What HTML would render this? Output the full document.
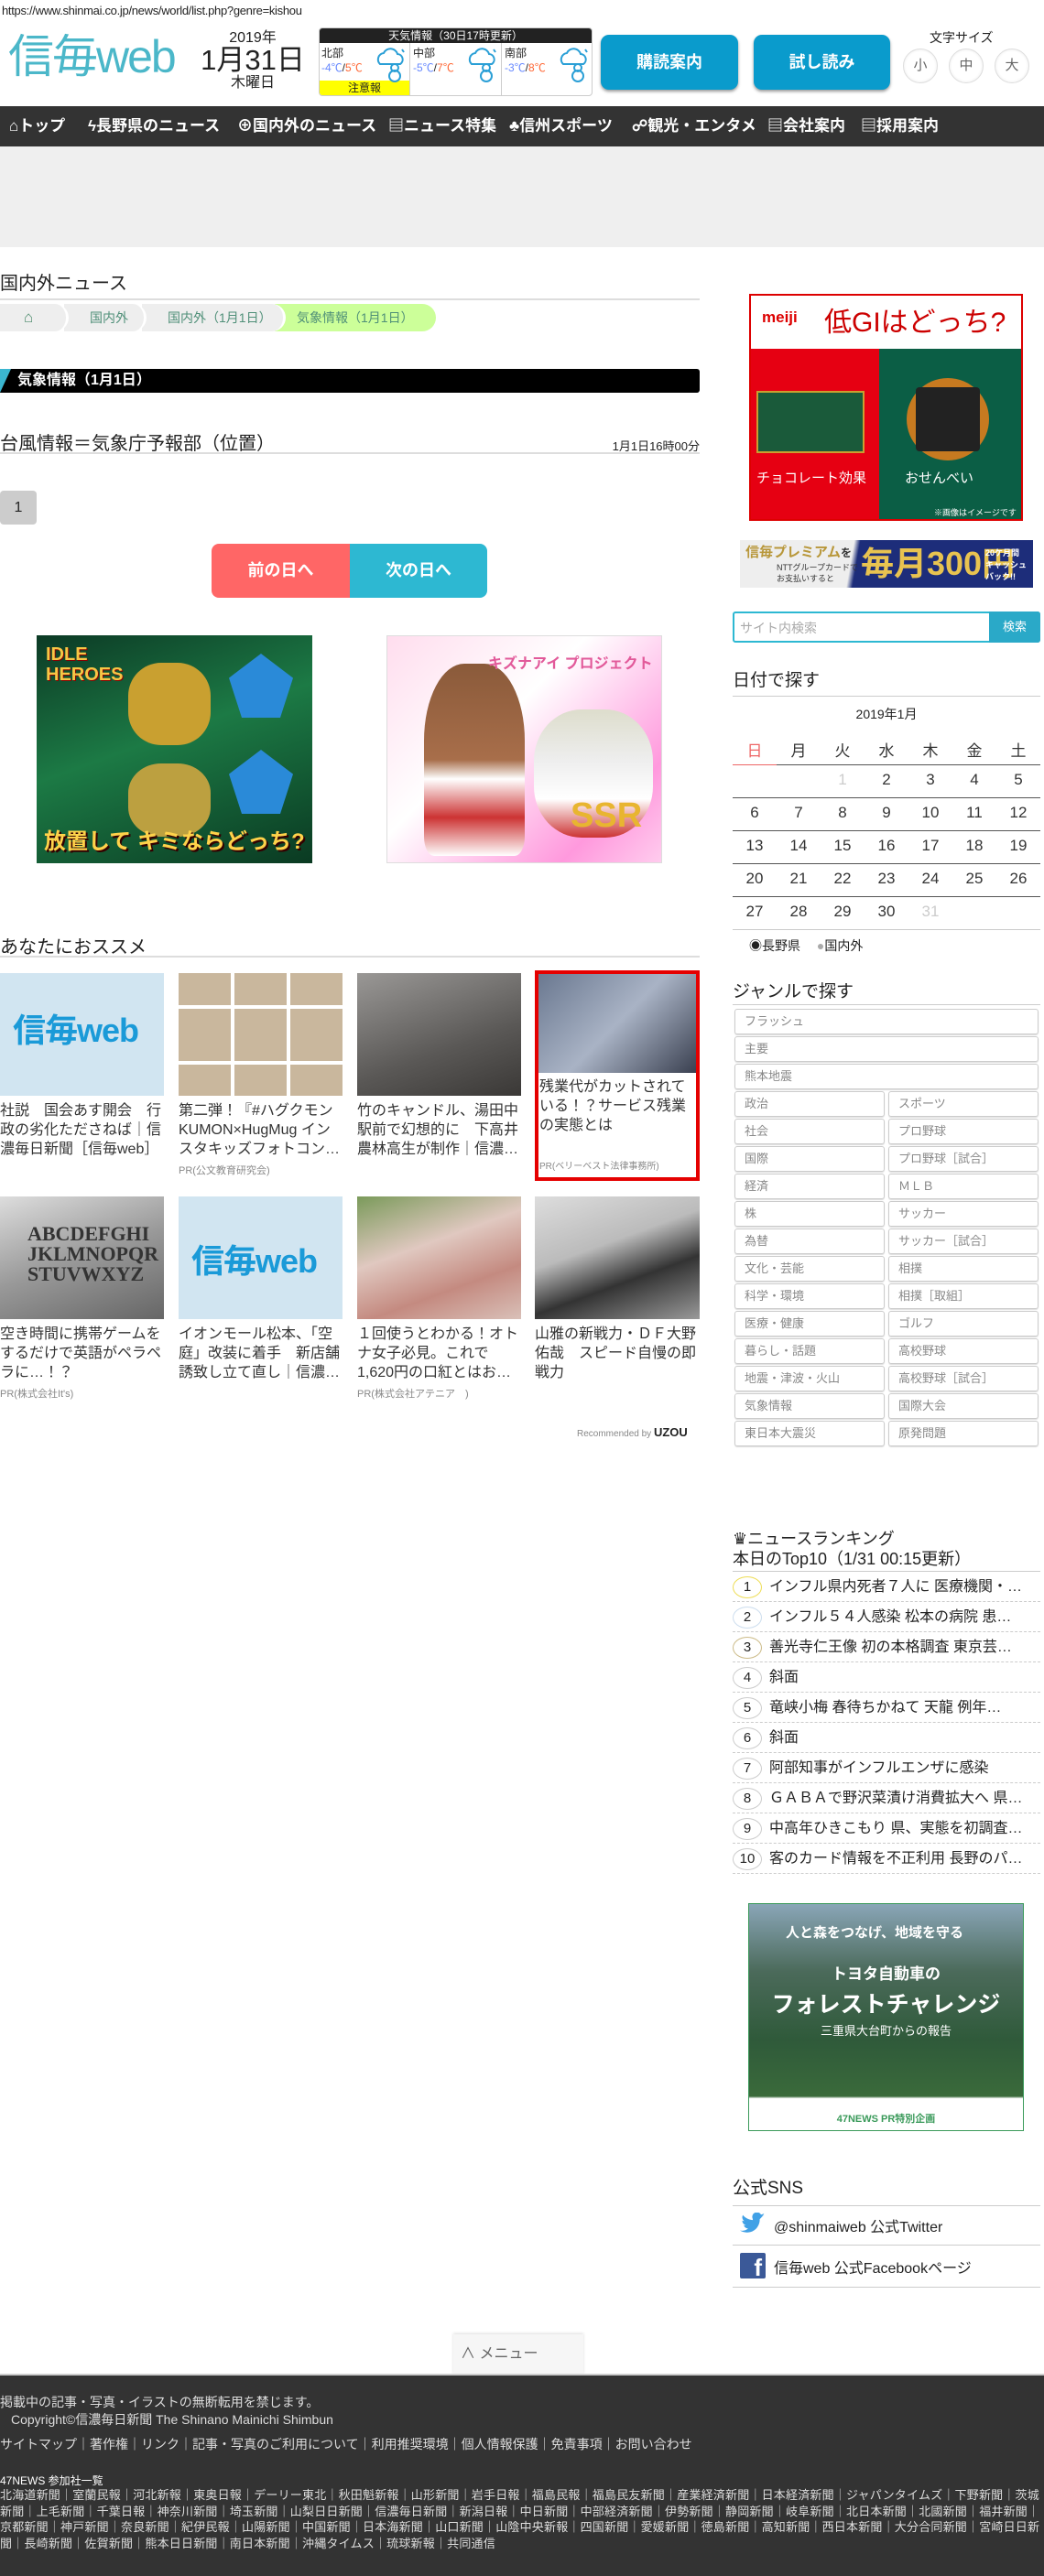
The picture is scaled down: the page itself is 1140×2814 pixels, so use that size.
<!DOCTYPE html>
<html><head><meta charset="utf-8">
<style>
*{margin:0;padding:0;box-sizing:border-box}
body{width:1140px;height:2814px;position:relative;background:#fff;font-family:"Liberation Sans","Noto Sans CJK JP",sans-serif;color:#222;overflow:hidden}
.a{position:absolute}
.nav span{position:absolute;top:0;line-height:44px;color:#fff;font-weight:bold;font-size:17px;white-space:nowrap}
.bc{position:absolute;top:332px;height:30px;line-height:30px;background:#eee;border-radius:0 15px 15px 0;color:#4f8f78;font-size:14px;padding-left:28px}
.g{position:absolute;height:28px;border:1px solid #ccc;border-radius:3px;color:#888;font-size:13px;line-height:26px;padding-left:10px;box-shadow:0 1px 1px #ddd}
.cal{position:absolute;width:48px;text-align:center;font-size:17px;color:#333}
.rk{position:absolute;left:800px;width:336px;height:33px;border-bottom:1px dashed #ccc;font-size:16px;line-height:33px;white-space:nowrap;overflow:hidden}
.rk b{display:inline-block;width:32px;height:24px;border:1px solid #ccc;border-radius:50%;text-align:center;line-height:22px;font-weight:normal;font-size:15px;margin:0 8px 0 0;vertical-align:middle}
.rt{position:absolute;font-size:16px;line-height:21px;color:#333;width:180px}
.pr{position:absolute;font-size:11px;color:#888}
.ft{position:absolute;left:0;color:#ddd;font-size:13px;white-space:nowrap}
</style></head><body>

<div class="a" style="left:2px;top:4px;font-size:13px;color:#222;letter-spacing:-0.3px">https://www.shinmai.co.jp/news/world/list.php?genre=kishou</div>

<div class="a" style="left:9px;top:34px;font-size:50px;color:#4bb7c9;letter-spacing:-2px;line-height:56px">信毎web</div>
<div class="a" style="left:220px;top:33px;width:112px;text-align:center;font-size:16px;line-height:18px">2019年</div>
<div class="a" style="left:218px;top:49px;width:116px;text-align:center;font-size:31px;line-height:34px">1月31日</div>
<div class="a" style="left:220px;top:82px;width:112px;text-align:center;font-size:16px;line-height:18px">木曜日</div>

<div class="a" style="left:348px;top:30px;width:299px;height:75px;border:1px solid #ccc;border-radius:4px;overflow:hidden">
 <div style="background:#222;color:#fff;font-size:12px;text-align:center;height:16px;line-height:16px">天気情報（30日17時更新）</div>
 <div class="a" style="left:0;top:16px;width:99px;height:58px;border-right:1px solid #ccc;font-size:12px;line-height:16px;padding:3px 2px">北部<br><span style="color:#68f">-4℃</span>/<span style="color:#f63">5℃</span></div>
 <div class="a" style="left:0;top:57px;width:98px;height:17px;background:#ff0;font-size:12px;text-align:center;line-height:17px">注意報</div>
 <div class="a" style="left:100px;top:16px;width:99px;height:58px;border-right:1px solid #ccc;font-size:12px;line-height:16px;padding:3px 2px">中部<br><span style="color:#68f">-5℃</span>/<span style="color:#f63">7℃</span></div>
 <div class="a" style="left:200px;top:16px;width:99px;height:58px;font-size:12px;line-height:16px;padding:3px 2px">南部<br><span style="color:#68f">-3℃</span>/<span style="color:#f63">8℃</span></div>
 <svg class="a" style="left:60px;top:19px" width="36" height="40"><g fill="none" stroke="#2a9fd6" stroke-width="2"><path d="M6 20a7 7 0 0 1 4-12a8 8 0 0 1 15 1a6 6 0 0 1 3 11z"/><circle cx="22" cy="24" r="4"/><circle cx="22" cy="33" r="6"/><path d="M30 4l2 3"/></g></svg>
 <svg class="a" style="left:160px;top:19px" width="36" height="40"><g fill="none" stroke="#2a9fd6" stroke-width="2"><path d="M6 20a7 7 0 0 1 4-12a8 8 0 0 1 15 1a6 6 0 0 1 3 11z"/><circle cx="22" cy="24" r="4"/><circle cx="22" cy="33" r="6"/><path d="M30 4l2 3"/></g></svg>
 <svg class="a" style="left:260px;top:19px" width="36" height="40"><g fill="none" stroke="#2a9fd6" stroke-width="2"><path d="M6 20a7 7 0 0 1 4-12a8 8 0 0 1 15 1a6 6 0 0 1 3 11z"/><circle cx="22" cy="24" r="4"/><circle cx="22" cy="33" r="6"/><path d="M30 4l2 3"/></g></svg>
</div>

<div class="a" style="left:656px;top:38px;width:150px;height:60px;background:#0a9bcc;border-radius:9px;box-shadow:0 2px 3px #999;color:#fff;font-weight:bold;font-size:18px;text-align:center;line-height:60px">購読案内</div>
<div class="a" style="left:823px;top:38px;width:149px;height:60px;background:#0a9bcc;border-radius:9px;box-shadow:0 2px 3px #999;color:#fff;font-weight:bold;font-size:18px;text-align:center;line-height:60px">試し読み</div>
<div class="a" style="left:1015px;top:31px;font-size:14px">文字サイズ</div>
<div class="a" style="left:986px;top:53px;width:38px;height:38px;border-radius:50%;background:radial-gradient(#fff 60%,#ddd);border:1px solid #ddd;text-align:center;line-height:36px;font-size:15px;color:#666">小</div>
<div class="a" style="left:1036px;top:53px;width:38px;height:38px;border-radius:50%;background:radial-gradient(#fff 60%,#ddd);border:1px solid #ddd;text-align:center;line-height:36px;font-size:15px;color:#666">中</div>
<div class="a" style="left:1086px;top:53px;width:38px;height:38px;border-radius:50%;background:radial-gradient(#fff 60%,#ddd);border:1px solid #ddd;text-align:center;line-height:36px;font-size:15px;color:#666">大</div>

<div class="a nav" style="left:0;top:116px;width:1140px;height:44px;background:#333">
 <span style="left:10px">⌂トップ</span><span style="left:96px">ϟ長野県のニュース</span><span style="left:259px">⊕国内外のニュース</span><span style="left:424px">▤ニュース特集</span><span style="left:556px">♣信州スポーツ</span><span style="left:690px">☍観光・エンタメ</span><span style="left:838px">▤会社案内</span><span style="left:940px">▤採用案内</span>
</div>
<div class="a" style="left:0;top:160px;width:1140px;height:110px;background:#efefef"></div>

<!-- main -->
<div class="a" style="left:0;top:293px;font-size:20px">国内外ニュース</div>
<div class="a" style="left:0;top:326px;width:764px;height:2px;background:#ddd"></div>
<div class="bc" style="left:300px;width:176px;background:#ccff99;z-index:1;padding-left:24px">気象情報（1月1日）</div>
<div class="bc" style="left:155px;width:157px;z-index:2;border-right:3px solid #fff">国内外（1月1日）</div>
<div class="bc" style="left:70px;width:90px;z-index:3;border-right:3px solid #fff">国内外</div>
<div class="bc" style="left:0;width:75px;z-index:4;border-right:3px solid #fff;padding-left:26px;color:#4a8a6a;font-size:17px">⌂</div>

<div class="a" style="left:0;top:403px;width:764px;height:26px;background:#000;border-radius:0 3px 3px 0"></div>
<div class="a" style="left:0;top:403px;width:0;height:0;border-top:26px solid #3bb6d0;border-right:12px solid transparent"></div>
<div class="a" style="left:19px;top:403px;line-height:26px;color:#fff;font-weight:bold;font-size:16px">気象情報（1月1日）</div>

<div class="a" style="left:0;top:468px;font-size:20px">台風情報＝気象庁予報部（位置）</div>
<div class="a" style="left:664px;top:477px;font-size:13px;width:100px;text-align:right">1月1日16時00分</div>
<div class="a" style="left:0;top:494px;width:764px;height:2px;background:#ddd"></div>

<div class="a" style="left:0;top:536px;width:40px;height:37px;background:#ccc;border-radius:4px;text-align:center;line-height:37px;font-size:16px">1</div>

<div class="a" style="left:231px;top:594px;width:151px;height:59px;background:#ff6666;border-radius:8px 0 0 8px;color:#fff;font-weight:bold;font-size:18px;text-align:center;line-height:59px">前の日へ</div>
<div class="a" style="left:382px;top:594px;width:150px;height:59px;background:#2db8d2;border-radius:0 8px 8px 0;color:#fff;font-weight:bold;font-size:18px;text-align:center;line-height:59px">次の日へ</div>

<div class="a" style="left:40px;top:694px;width:301px;height:249px;background:linear-gradient(160deg,#0c3a25,#1c7a45 45%,#0a3a22);overflow:hidden">
 <div class="a" style="left:10px;top:10px;color:#f7c645;font-weight:bold;font-size:20px;line-height:22px;text-shadow:1px 1px #800">IDLE<br>HEROES</div>
 <div class="a" style="left:210px;top:20px;width:70px;height:70px;background:#2a8ad8;clip-path:polygon(50% 0,100% 38%,80% 100%,20% 100%,0 38%)"></div>
 <div class="a" style="left:210px;top:125px;width:70px;height:70px;background:#2a8ad8;clip-path:polygon(50% 0,100% 38%,80% 100%,20% 100%,0 38%)"></div>
 <div class="a" style="left:100px;top:30px;width:90px;height:90px;background:#c9a030;border-radius:40%"></div>
 <div class="a" style="left:100px;top:140px;width:90px;height:80px;background:#bca040;border-radius:40%"></div>
 <div class="a" style="left:8px;top:205px;color:#ffd24a;font-weight:bold;font-size:24px;text-shadow:2px 2px #300">放置して キミならどっち?</div>
</div>
<div class="a" style="left:422px;top:694px;width:301px;height:249px;background:linear-gradient(135deg,#fde,#fff 40%,#f9d 80%,#fce);overflow:hidden;border:1px solid #ddd">
 <div class="a" style="left:40px;top:30px;width:110px;height:210px;background:linear-gradient(#8a5a3a,#a86e4a 50%,#fff 60%,#c33 80%,#fff);border-radius:40% 40% 10% 10%"></div>
 <div class="a" style="left:160px;top:80px;width:130px;height:140px;background:linear-gradient(#ddc,#eee 40%,#fff 70%,#c33);border-radius:40%"></div>
 <div class="a" style="left:110px;top:16px;color:#e25a9a;font-size:16px;font-weight:bold">キズナアイ プロジェクト</div>
 <div class="a" style="left:200px;top:175px;color:#e8b530;font-size:38px;font-weight:bold">SSR</div>
</div>

<div class="a" style="left:0;top:1018px;font-size:20px">あなたにおススメ</div>
<div class="a" style="left:0;top:1044px;width:764px;height:2px;background:#ddd"></div>

<div class="a" style="left:0;top:1063px;width:179px;height:134px;background:#d1e5f1"><div style="margin:34px 0 0 14px;color:#1a9ad8;font-size:36px;font-weight:bold;letter-spacing:-1px">信毎web</div></div>
<div class="a" style="left:195px;top:1063px;width:179px;height:134px;background:repeating-linear-gradient(90deg,#c9b79d 0 57px,#fff 57px 61px),#c9b79d"><div style="position:absolute;top:35px;left:0;width:179px;height:4px;background:#fff"></div><div style="position:absolute;top:96px;left:0;width:179px;height:4px;background:#fff"></div></div>
<div class="a" style="left:390px;top:1063px;width:179px;height:134px;background:linear-gradient(160deg,#9a9896,#5a5856 60%,#3a3836)"></div>
<div class="a" style="left:584px;top:1060px;width:180px;height:230px;border:4px solid #e50000"><div style="height:108px;background:linear-gradient(135deg,#6a7890,#a9b3c5 50%,#3a4050)"></div></div>

<div class="rt" style="left:0;top:1203px">社説　国会あす開会　行政の劣化たださねば｜信濃毎日新聞［信毎web］</div>
<div class="rt" style="left:195px;top:1203px">第二弾！『#ハグクモン KUMON×HugMug インスタキッズフォトコン…</div>
<div class="pr" style="left:195px;top:1270px">PR(公文教育研究会)</div>
<div class="rt" style="left:390px;top:1203px">竹のキャンドル、湯田中駅前で幻想的に　下高井農林高生が制作｜信濃…</div>
<div class="rt" style="left:589px;top:1177px;width:172px">残業代がカットされている！？サービス残業の実態とは</div>
<div class="pr" style="left:589px;top:1265px;font-size:10px">PR(ベリーベスト法律事務所)</div>

<div class="a" style="left:0;top:1307px;width:179px;height:134px;background:linear-gradient(160deg,#ddd,#999 50%,#666)"><div style="margin:30px 0 0 30px;font:bold 22px 'Liberation Serif',serif;color:#333;line-height:22px">ABCDEFGHI<br>JKLMNOPQR<br>STUVWXYZ</div></div>
<div class="a" style="left:195px;top:1307px;width:179px;height:134px;background:#d1e5f1"><div style="margin:42px 0 0 14px;color:#1a9ad8;font-size:36px;font-weight:bold;letter-spacing:-1px">信毎web</div></div>
<div class="a" style="left:390px;top:1307px;width:179px;height:134px;background:linear-gradient(160deg,#7a9a5a,#e0c8c0 40%,#c48a80 70%,#d9c0b8)"></div>
<div class="a" style="left:584px;top:1307px;width:180px;height:134px;background:linear-gradient(160deg,#ddd,#bbb 40%,#333 65%,#999)"></div>

<div class="rt" style="left:0;top:1447px">空き時間に携帯ゲームをするだけで英語がペラペラに…！？</div>
<div class="pr" style="left:0;top:1514px">PR(株式会社It's)</div>
<div class="rt" style="left:195px;top:1447px">イオンモール松本、「空庭」改装に着手　新店舗誘致し立て直し｜信濃…</div>
<div class="rt" style="left:390px;top:1447px">１回使うとわかる！オトナ女子必見。これで1,620円の口紅とはお…</div>
<div class="pr" style="left:390px;top:1514px">PR(株式会社アテニア　)</div>
<div class="rt" style="left:584px;top:1447px">山雅の新戦力・ＤＦ大野佑哉　スピード自慢の即戦力</div>
<div class="a" style="left:630px;top:1557px;font-size:10px;color:#888">Recommended by <b style="font-size:13px;color:#222">UZOU</b></div>

<!-- sidebar -->
<div class="a" style="left:818px;top:321px;width:299px;height:248px;border:2px solid #d00;background:#fff;overflow:hidden">
 <div class="a" style="left:12px;top:14px;color:#d00;font-weight:bold;font-size:17px">meiji</div>
 <div class="a" style="left:80px;top:4px;color:#c00;font-size:30px">低GIはどっち?</div>
 <div class="a" style="left:0;top:58px;width:140px;height:190px;background:#e60012"></div>
 <div class="a" style="left:140px;top:58px;width:159px;height:190px;background:#0b5e45"></div>
 <div class="a" style="left:6px;top:104px;width:118px;height:68px;background:#1a5a3a;border:2px solid #c9a030"></div>
 <div class="a" style="left:170px;top:90px;width:90px;height:90px;border-radius:50%;background:#c77a20"></div>
 <div class="a" style="left:180px;top:100px;width:70px;height:70px;background:#222;border-radius:4px"></div>
 <div class="a" style="left:6px;top:188px;color:#fff;font-size:15px">チョコレート効果</div>
 <div class="a" style="left:168px;top:188px;color:#fff;font-size:15px">おせんべい</div>
 <div class="a" style="left:200px;top:230px;color:#fff;font-size:9px">※画像はイメージです</div>
</div>
<div class="a" style="left:808px;top:590px;width:320px;height:52px;background:linear-gradient(100deg,#eee 38%,#1d2d7a 40%);overflow:hidden">
 <div class="a" style="left:6px;top:2px;color:#b8973a;font-weight:bold;font-size:15px">信毎プレミアム<span style="color:#333;font-size:12px">を</span></div>
 <div class="a" style="left:40px;top:24px;color:#333;font-size:9px;line-height:12px">NTTグループカードで<br>お支払いすると</div>
 <div class="a" style="left:132px;top:4px;color:#e8c350;font-weight:bold;font-size:36px;line-height:44px">毎月300円</div>
 <div class="a" style="left:268px;top:8px;color:#fff;font-size:9px;font-weight:bold;line-height:13px">20ケ月間<br>キャッシュ<br>バック!!</div>
</div>

<div class="a" style="left:800px;top:668px;width:336px;height:34px;border:2px solid #2db8d2;border-radius:3px"></div>
<div class="a" style="left:808px;top:676px;font-size:14px;color:#aaa">サイト内検索</div>
<div class="a" style="left:1080px;top:668px;width:56px;height:34px;background:#2aa9c8;color:#fff;font-size:13px;text-align:center;line-height:34px;border-radius:0 3px 3px 0">検索</div>

<div class="a" style="left:800px;top:728px;font-size:19px">日付で探す</div>
<div class="a" style="left:800px;top:760px;width:336px;height:1px;background:#ccc"></div>
<div class="a" style="left:800px;top:770px;width:336px;text-align:center;font-size:14px">2019年1月</div>
<div class="a" style="left:800px;top:835px;width:48px;height:1px;background:#e66"></div>
<div class="a" style="left:848px;top:835px;width:288px;height:1px;background:#555"></div>
<div class="a" style="left:800px;top:871px;width:336px;height:1px;background:#555"></div>
<div class="a" style="left:800px;top:907px;width:336px;height:1px;background:#555"></div>
<div class="a" style="left:800px;top:943px;width:336px;height:1px;background:#555"></div>
<div class="a" style="left:800px;top:979px;width:336px;height:1px;background:#555"></div>
<div class="a" style="left:800px;top:1015px;width:336px;height:1px;background:#ccc"></div>
<div class="cal" style="left:800px;top:806px;color:#e66">日</div><div class="cal" style="left:848px;top:806px">月</div><div class="cal" style="left:896px;top:806px">火</div><div class="cal" style="left:944px;top:806px">水</div><div class="cal" style="left:992px;top:806px">木</div><div class="cal" style="left:1040px;top:806px">金</div><div class="cal" style="left:1088px;top:806px">土</div>
<div class="cal" style="left:896px;top:842px;color:#ccc">1</div><div class="cal" style="left:944px;top:842px">2</div><div class="cal" style="left:992px;top:842px">3</div><div class="cal" style="left:1040px;top:842px">4</div><div class="cal" style="left:1088px;top:842px">5</div>
<div class="cal" style="left:800px;top:878px">6</div><div class="cal" style="left:848px;top:878px">7</div><div class="cal" style="left:896px;top:878px">8</div><div class="cal" style="left:944px;top:878px">9</div><div class="cal" style="left:992px;top:878px">10</div><div class="cal" style="left:1040px;top:878px">11</div><div class="cal" style="left:1088px;top:878px">12</div>
<div class="cal" style="left:800px;top:914px">13</div><div class="cal" style="left:848px;top:914px">14</div><div class="cal" style="left:896px;top:914px">15</div><div class="cal" style="left:944px;top:914px">16</div><div class="cal" style="left:992px;top:914px">17</div><div class="cal" style="left:1040px;top:914px">18</div><div class="cal" style="left:1088px;top:914px">19</div>
<div class="cal" style="left:800px;top:950px">20</div><div class="cal" style="left:848px;top:950px">21</div><div class="cal" style="left:896px;top:950px">22</div><div class="cal" style="left:944px;top:950px">23</div><div class="cal" style="left:992px;top:950px">24</div><div class="cal" style="left:1040px;top:950px">25</div><div class="cal" style="left:1088px;top:950px">26</div>
<div class="cal" style="left:800px;top:986px">27</div><div class="cal" style="left:848px;top:986px">28</div><div class="cal" style="left:896px;top:986px">29</div><div class="cal" style="left:944px;top:986px">30</div><div class="cal" style="left:992px;top:986px;color:#ccc">31</div>
<div class="a" style="left:818px;top:1023px;font-size:14px">◉長野県　 <span style="color:#aaa">●</span>国内外</div>

<div class="a" style="left:800px;top:1068px;font-size:19px">ジャンルで探す</div>
<div class="a" style="left:800px;top:1097px;width:336px;height:1px;background:#ccc"></div>
<div class="g" style="left:802px;top:1102px;width:332px">フラッシュ</div>
<div class="g" style="left:802px;top:1132px;width:332px">主要</div>
<div class="g" style="left:802px;top:1162px;width:332px">熊本地震</div>
<div class="g" style="left:802px;top:1192px;width:164px">政治</div><div class="g" style="left:970px;top:1192px;width:164px">スポーツ</div>
<div class="g" style="left:802px;top:1222px;width:164px">社会</div><div class="g" style="left:970px;top:1222px;width:164px">プロ野球</div>
<div class="g" style="left:802px;top:1252px;width:164px">国際</div><div class="g" style="left:970px;top:1252px;width:164px">プロ野球［試合］</div>
<div class="g" style="left:802px;top:1282px;width:164px">経済</div><div class="g" style="left:970px;top:1282px;width:164px">ＭＬＢ</div>
<div class="g" style="left:802px;top:1312px;width:164px">株</div><div class="g" style="left:970px;top:1312px;width:164px">サッカー</div>
<div class="g" style="left:802px;top:1342px;width:164px">為替</div><div class="g" style="left:970px;top:1342px;width:164px">サッカー［試合］</div>
<div class="g" style="left:802px;top:1372px;width:164px">文化・芸能</div><div class="g" style="left:970px;top:1372px;width:164px">相撲</div>
<div class="g" style="left:802px;top:1402px;width:164px">科学・環境</div><div class="g" style="left:970px;top:1402px;width:164px">相撲［取組］</div>
<div class="g" style="left:802px;top:1432px;width:164px">医療・健康</div><div class="g" style="left:970px;top:1432px;width:164px">ゴルフ</div>
<div class="g" style="left:802px;top:1462px;width:164px">暮らし・話題</div><div class="g" style="left:970px;top:1462px;width:164px">高校野球</div>
<div class="g" style="left:802px;top:1492px;width:164px">地震・津波・火山</div><div class="g" style="left:970px;top:1492px;width:164px">高校野球［試合］</div>
<div class="g" style="left:802px;top:1522px;width:164px">気象情報</div><div class="g" style="left:970px;top:1522px;width:164px">国際大会</div>
<div class="g" style="left:802px;top:1552px;width:164px">東日本大震災</div><div class="g" style="left:970px;top:1552px;width:164px">原発問題</div>

<div class="a" style="left:800px;top:1670px;font-size:18px;line-height:22px">♛ニュースランキング<br>本日のTop10（1/31 00:15更新）</div>
<div class="a" style="left:800px;top:1716px;width:336px;height:1px;background:#ccc"></div>
<div class="rk" style="top:1717px"><b style="border-color:#eedd55">1</b>インフル県内死者７人に 医療機関・…</div>
<div class="rk" style="top:1750px"><b style="border-color:#cde">2</b>インフル５４人感染 松本の病院 患…</div>
<div class="rk" style="top:1783px"><b style="border-color:#cb8">3</b>善光寺仁王像 初の本格調査 東京芸…</div>
<div class="rk" style="top:1816px"><b>4</b>斜面</div>
<div class="rk" style="top:1849px"><b>5</b>竜峡小梅 春待ちかねて 天龍 例年…</div>
<div class="rk" style="top:1882px"><b>6</b>斜面</div>
<div class="rk" style="top:1915px"><b>7</b>阿部知事がインフルエンザに感染</div>
<div class="rk" style="top:1948px"><b>8</b>ＧＡＢＡで野沢菜漬け消費拡大へ 県…</div>
<div class="rk" style="top:1981px"><b>9</b>中高年ひきこもり 県、実態を初調査…</div>
<div class="rk" style="top:2014px"><b>10</b>客のカード情報を不正利用 長野のパ…</div>

<div class="a" style="left:817px;top:2079px;width:301px;height:249px;border:1px solid #3a9a5a;background:linear-gradient(180deg,#8aa6b8,#4b6a5a 30%,#2f5a3a 60%,#3a6a3a 85%,#fff 86%);overflow:hidden">
 <div class="a" style="left:40px;top:20px;color:#fff;font-size:15px;font-weight:bold">人と森をつなげ、地域を守る</div>
 <div class="a" style="left:0;top:62px;width:299px;text-align:center;color:#fff;font-size:17px;font-weight:bold">トヨタ自動車の</div>
 <div class="a" style="left:0;top:90px;width:299px;text-align:center;color:#fff;font-size:25px;font-weight:bold">フォレストチャレンジ</div>
 <div class="a" style="left:0;top:128px;width:299px;text-align:center;color:#fff;font-size:13px">三重県大台町からの報告</div>
 <div class="a" style="left:0;top:226px;width:299px;text-align:center;color:#3a9a5a;font-size:11px;font-weight:bold">47NEWS PR特別企画</div>
</div>

<div class="a" style="left:800px;top:2375px;font-size:19px">公式SNS</div>
<div class="a" style="left:800px;top:2409px;width:336px;height:1px;background:#ccc"></div>
<svg class="a" style="left:806px;top:2417px" width="30" height="24"><path d="M29 3c-1 .5-2 .8-3 1 1-.6 2-1.7 2.3-3-1 .6-2 1-3.3 1.3A5 5 0 0 0 16 7c0 .4 0 .8.1 1.1C11.6 7.900 7.8 5.700 5.2 2.700a5 5 0 0 0 1.600 6.700c-.8 0-1.600-.3-2.300-.6 0 2.400 1.800 4.500 4 5-.7.2-1.600.2-2.300.1.7 2 2.500 3.400 4.700 3.500A10 10 0 0 1 2 19.500a14 14 0 0 0 7.600 2.200c9.100 0 14-7.500 14-14v-.6c1-.7 1.800-1.600 2.400-2.600z" fill="#41a1e6"/></svg>
<div class="a" style="left:845px;top:2419px;font-size:16px">@shinmaiweb 公式Twitter</div>
<div class="a" style="left:800px;top:2452px;width:336px;height:1px;background:#ccc"></div>
<div class="a" style="left:808px;top:2461px;width:28px;height:28px;background:#3b5998;border-radius:2px;color:#fff;font-weight:bold;font-size:26px;text-align:right;padding-right:4px;line-height:32px;overflow:hidden">f</div>
<div class="a" style="left:845px;top:2464px;font-size:16px">信毎web 公式Facebookページ</div>
<div class="a" style="left:800px;top:2498px;width:336px;height:1px;background:#ccc"></div>

<div class="a" style="left:495px;top:2550px;width:142px;height:44px;background:#f6f6f6;box-shadow:0 -1px 3px #ddd;font-size:16px;color:#666;line-height:44px;padding-left:8px">∧ メニュー</div>

<div class="a" style="left:0;top:2593px;width:1140px;height:221px;background:#333;border-top:2px solid #ccc"></div>
<div class="ft" style="top:2614px;font-size:14px">掲載中の記事・写真・イラストの無断転用を禁じます。</div>
<div class="ft" style="top:2633px;left:12px;font-size:14px">Copyright©信濃毎日新聞 The Shinano Mainichi Shimbun</div>
<div class="ft" style="top:2660px;font-size:14px">サイトマップ｜著作権｜リンク｜記事・写真のご利用について｜利用推奨環境｜個人情報保護｜免責事項｜お問い合わせ</div>
<div class="ft" style="top:2701px;font-size:12px;color:#fff">47NEWS 参加社一覧</div>
<div class="ft" style="top:2717px;font-size:13px;width:1140px;white-space:normal;line-height:17.5px;letter-spacing:0.2px;word-break:break-all">北海道新聞｜室蘭民報｜河北新報｜東奥日報｜デーリー東北｜秋田魁新報｜山形新聞｜岩手日報｜福島民報｜福島民友新聞｜産業経済新聞｜日本経済新聞｜ジャパンタイムズ｜下野新聞｜茨城新聞｜上毛新聞｜千葉日報｜神奈川新聞｜埼玉新聞｜山梨日日新聞｜信濃毎日新聞｜新潟日報｜中日新聞｜中部経済新聞｜伊勢新聞｜静岡新聞｜岐阜新聞｜北日本新聞｜北國新聞｜福井新聞｜京都新聞｜神戸新聞｜奈良新聞｜紀伊民報｜山陽新聞｜中国新聞｜日本海新聞｜山口新聞｜山陰中央新報｜四国新聞｜愛媛新聞｜徳島新聞｜高知新聞｜西日本新聞｜大分合同新聞｜宮崎日日新聞｜長崎新聞｜佐賀新聞｜熊本日日新聞｜南日本新聞｜沖縄タイムス｜琉球新報｜共同通信</div>
</body></html>
